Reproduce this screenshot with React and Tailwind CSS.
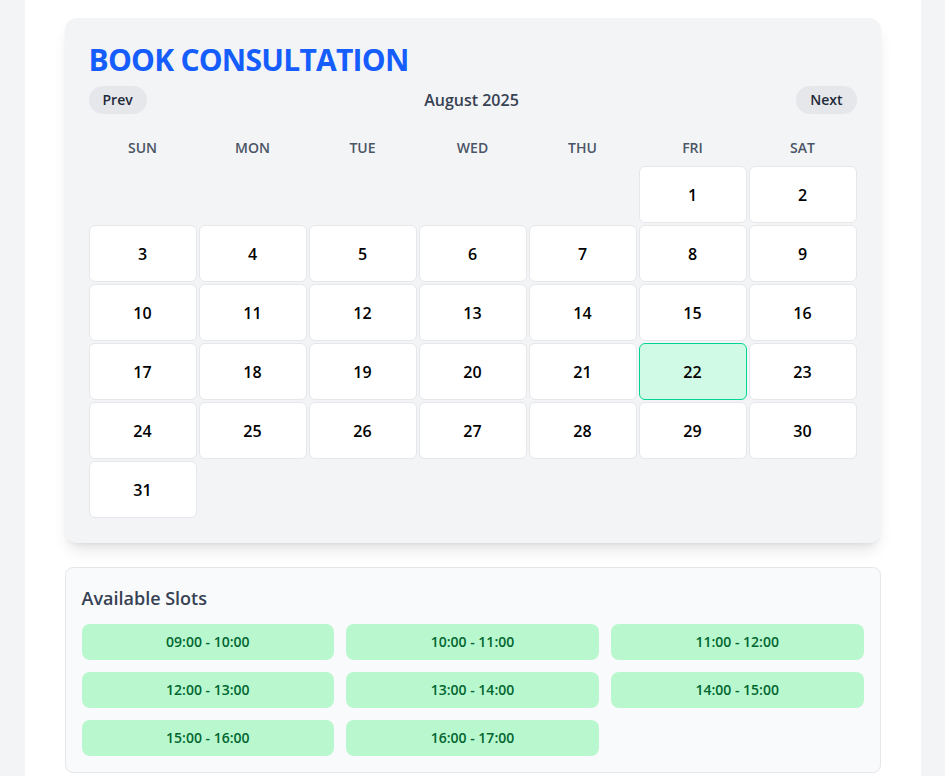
import React, { useState } from 'react';

const WEEKDAYS = ['SUN', 'MON', 'TUE', 'WED', 'THU', 'FRI', 'SAT'];
const SLOTS = [
  '09:00 - 10:00',
  '10:00 - 11:00',
  '11:00 - 12:00',
  '12:00 - 13:00',
  '13:00 - 14:00',
  '14:00 - 15:00',
  '15:00 - 16:00',
  '16:00 - 17:00',
];

const App = () => {
  const [selected, setSelected] = useState(22);

  // August 2025 starts on a Friday
  const offset = 5;
  const days = Array.from({ length: 31 }, (_, i) => i + 1);

  return (
    <div
      className="min-h-screen bg-gray-100"
      style={{ fontFamily: '"Open Sans", "Noto Sans", sans-serif' }}
    >
      <div className="max-w-4xl mx-auto bg-white min-h-screen px-10 pt-[18px] pb-10">
        {/* Calendar */}
        <div className="bg-gray-100 rounded-xl shadow-lg px-6 pt-6 pb-[25px]">
          <h1 className="text-3xl font-bold text-blue-600 tracking-tight mb-2">
            BOOK CONSULTATION
          </h1>

          <div className="flex items-center justify-between mb-6">
            <button className="bg-gray-200 rounded-full px-[14px] py-1 text-sm font-semibold text-gray-800">
              Prev
            </button>
            <span className="font-semibold text-gray-700">August 2025</span>
            <button className="bg-gray-200 rounded-full px-[14px] py-1 text-sm font-semibold text-gray-800">
              Next
            </button>
          </div>

          <div className="grid grid-cols-7 gap-0.5 mb-2">
            {WEEKDAYS.map((d) => (
              <div key={d} className="text-center text-sm font-semibold text-gray-600">
                {d}
              </div>
            ))}
          </div>

          <div className="grid grid-cols-7 gap-0.5">
            {Array.from({ length: offset }).map((_, i) => (
              <div key={'e' + i} className="h-[57px]" />
            ))}
            {days.map((d) => (
              <button
                key={d}
                onClick={() => setSelected(d)}
                className={
                  d === selected
                    ? 'h-[57px] rounded-md border border-emerald-400 bg-emerald-100 font-semibold text-black'
                    : 'h-[57px] rounded-md border border-gray-200 bg-white font-semibold text-black'
                }
              >
                {d}
              </button>
            ))}
          </div>
        </div>

        {/* Slots */}
        <div className="mt-6 bg-gray-50 border border-gray-200 rounded-lg p-4">
          <h2 className="text-lg font-semibold text-gray-700 mb-3">Available Slots</h2>
          <div className="grid grid-cols-3 gap-3">
            {SLOTS.map((s) => (
              <button
                key={s}
                className="bg-green-200 text-green-800 rounded-lg py-2 text-sm font-semibold"
              >
                {s}
              </button>
            ))}
          </div>
        </div>
      </div>
    </div>
  );
};

export default App;
